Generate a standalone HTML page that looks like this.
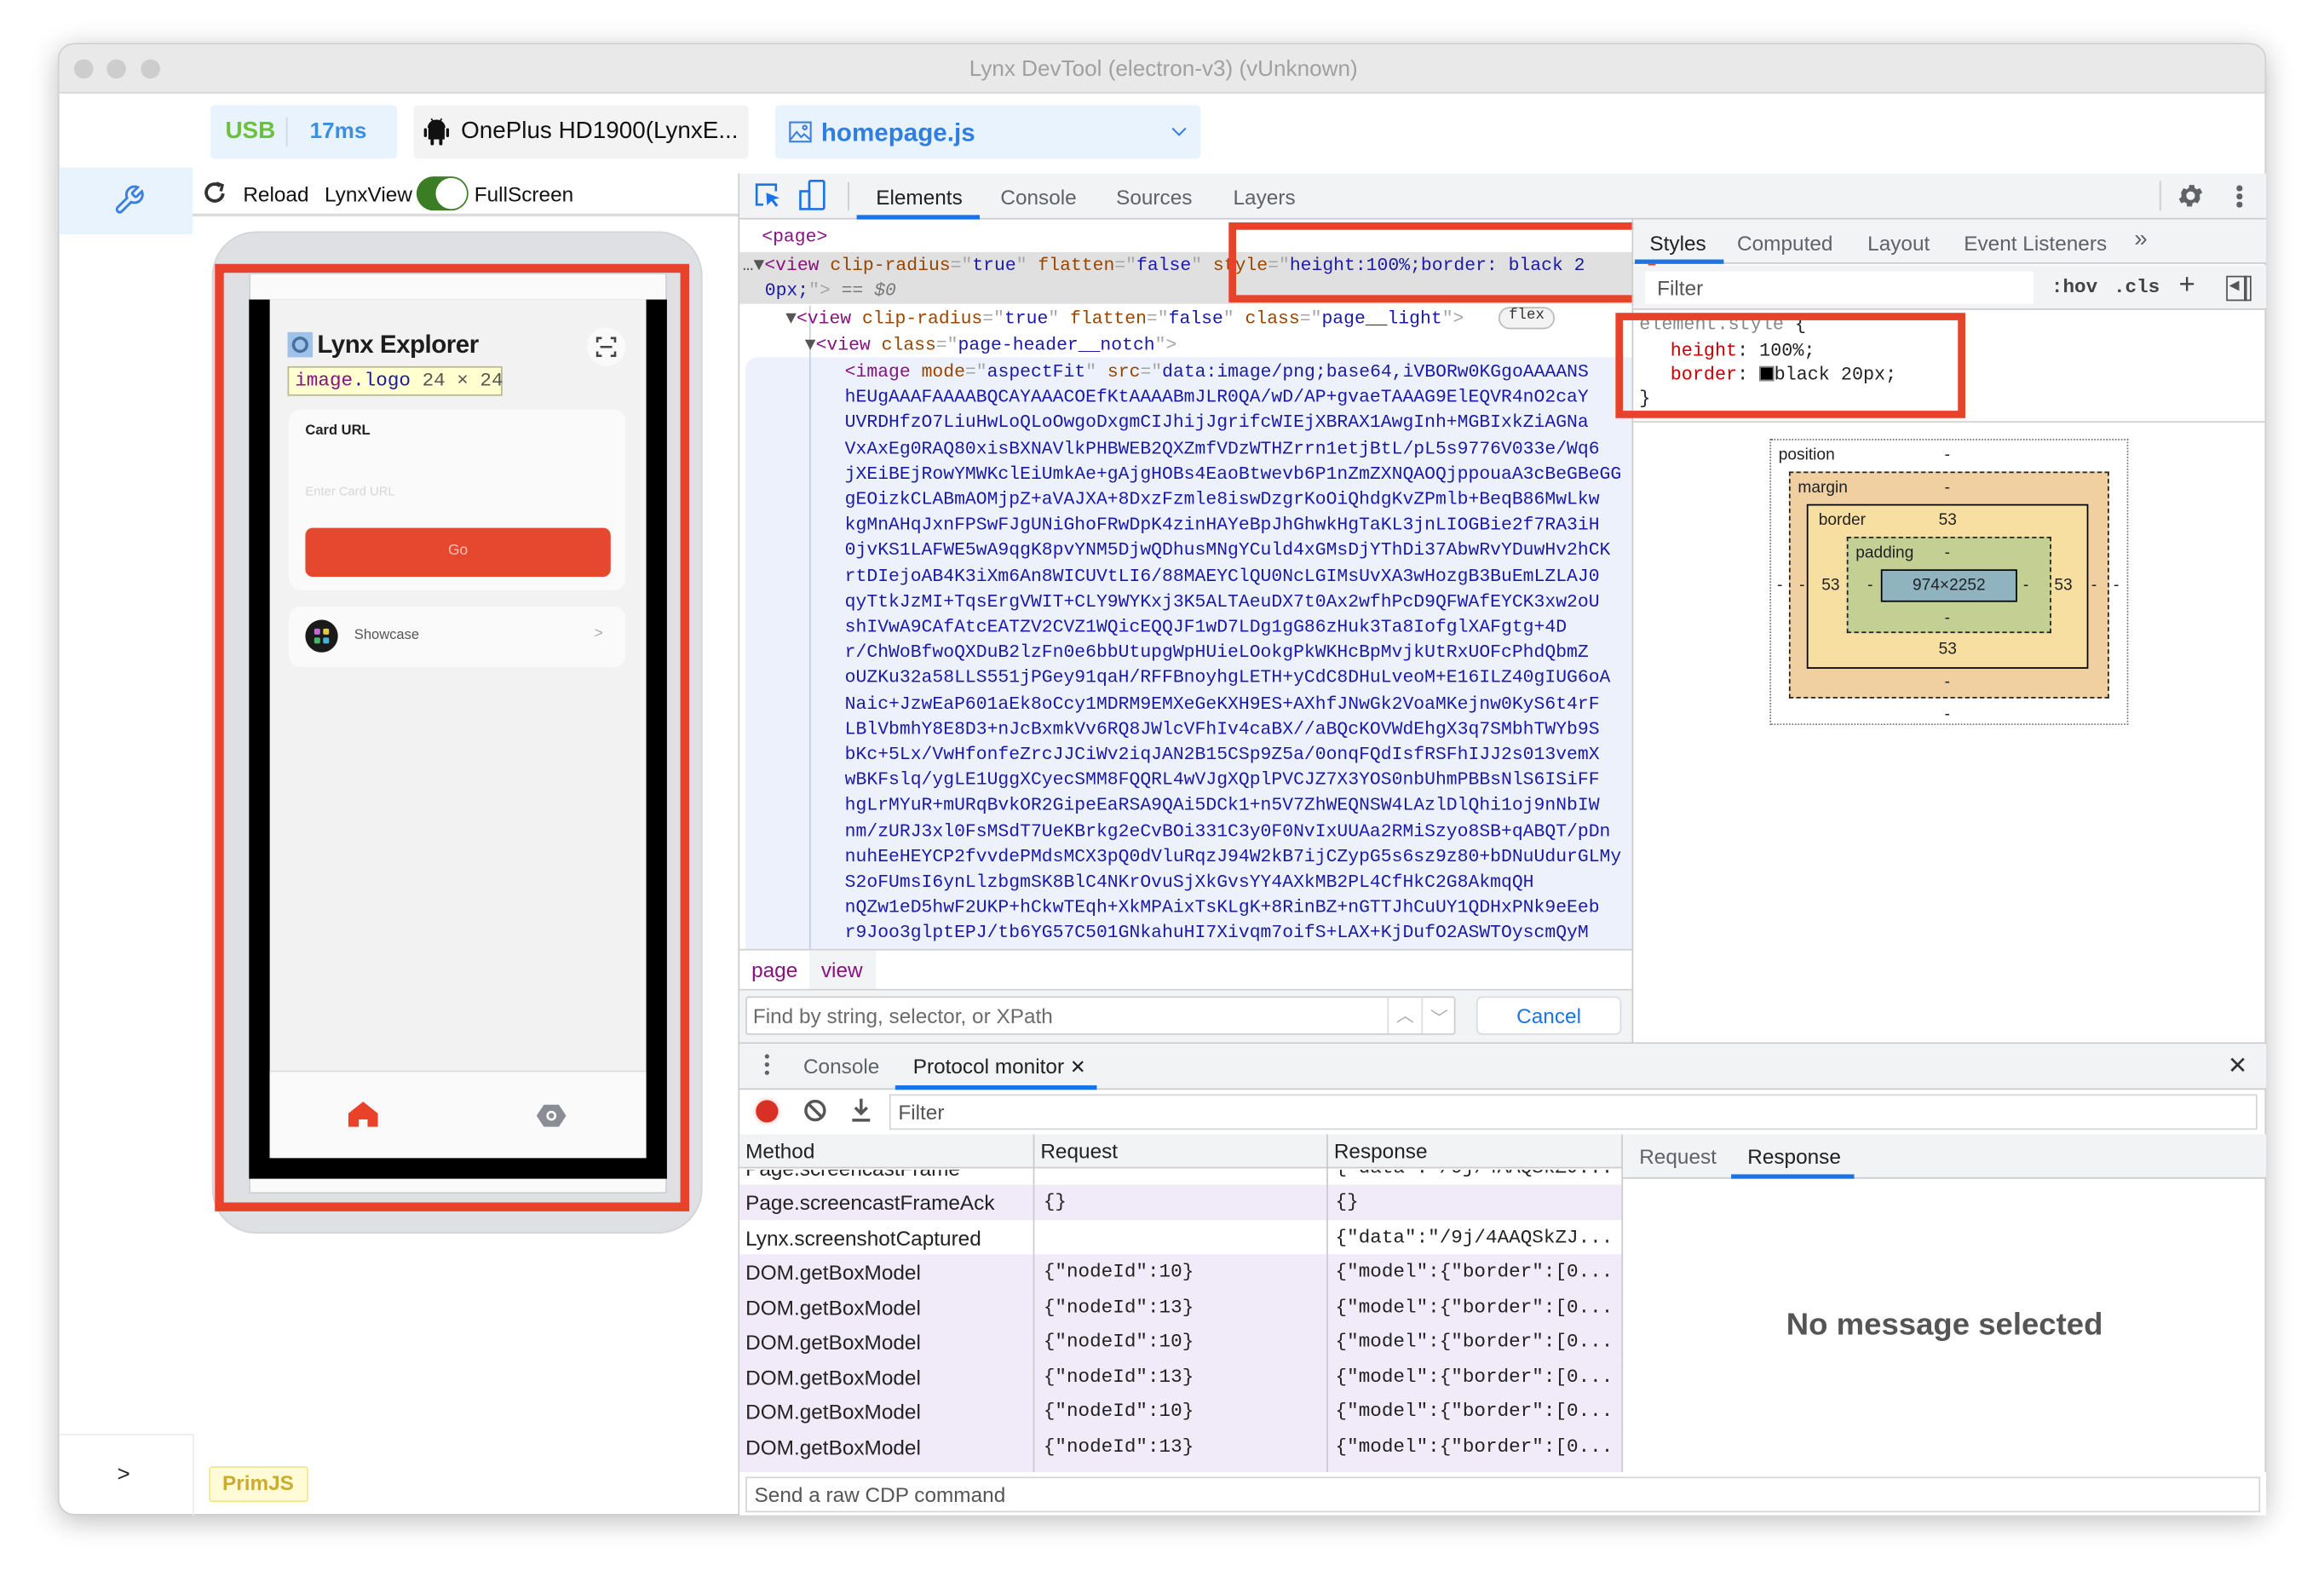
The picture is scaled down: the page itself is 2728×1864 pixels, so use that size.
<!DOCTYPE html>
<html><head><meta charset="utf-8">
<style>
*{box-sizing:border-box;margin:0;padding:0}
html,body{width:2728px;height:1864px;overflow:hidden;background:#fff;font-family:"Liberation Sans",Arial,sans-serif}
#root{position:absolute;left:0;top:0;width:1568px;height:1071px;transform:scale(1.7398,1.7404);transform-origin:0 0}
.a{position:absolute}
.t{position:absolute;white-space:nowrap}
.mono{font-family:"Liberation Mono","DejaVu Sans Mono",monospace}
.tag{color:#881280}.at{color:#994500}.av{color:#1a1aa6}.pu{color:#a5a5a5}
.code{font-size:12.3px;line-height:17.2px;color:#1a1aa6}
.row{position:absolute;left:499px;width:596px;height:23.5px;font-size:14px;color:#222}
.row span{position:absolute;top:4px;white-space:nowrap}
</style></head><body><div id="root">
<!-- window -->
<div class="a" style="left:39px;top:29px;width:1490px;height:993px;border-radius:11px;background:#fff;box-shadow:0 4px 18px rgba(0,0,0,.25);overflow:hidden;border:1px solid #cfcfcf">
 <div class="a" style="left:0;top:0;width:1490px;height:33px;background:#e9e9e9;border-bottom:1px solid #d6d6d6"></div>
 <div class="a" style="left:10px;top:10px;width:13px;height:13px;border-radius:50%;background:#cdcdcd"></div>
 <div class="a" style="left:32px;top:10px;width:13px;height:13px;border-radius:50%;background:#cdcdcd"></div>
 <div class="a" style="left:55px;top:10px;width:13px;height:13px;border-radius:50%;background:#cdcdcd"></div>
 <div class="t" style="left:0;width:1490px;text-align:center;top:8px;font-size:15px;color:#a0a0a0">Lynx DevTool (electron-v3) (vUnknown)</div>
</div>

<!-- sidebar -->
<div class="a" style="left:40px;top:113px;width:90px;height:45px;background:#e8f3fd"></div>
<svg class="a" style="left:76px;top:124px" width="22" height="22" viewBox="0 0 24 24" fill="none" stroke="#3b7fe0" stroke-width="1.8"><path d="M14.7 6.3a1 1 0 000 1.4l1.6 1.6a1 1 0 001.4 0l3.8-3.8a6 6 0 01-7.9 7.9l-6.9 6.9a2.1 2.1 0 01-3-3l6.9-6.9a6 6 0 017.9-7.9z"/></svg>
<div class="a" style="left:40px;top:967px;width:90px;height:1px;background:#ececec"></div>
<div class="a" style="left:130px;top:967px;width:1px;height:55px;background:#ececec"></div>
<div class="t" style="left:79px;top:986px;font-size:15px;color:#222">&gt;</div>
<div class="a" style="left:141px;top:989px;width:67px;height:24px;background:#fffbd6;border:1px solid #f3e68a;border-radius:2px"></div>
<div class="t" style="left:150px;top:992px;font-size:14px;font-weight:bold;color:#cdac2c">PrimJS</div>

<!-- top chips -->
<div class="a" style="left:142px;top:71px;width:126px;height:36px;background:#e8f3fd;border-radius:3px"></div>
<div class="t" style="left:152px;top:80px;font-size:16px;font-weight:bold;color:#6cc03c">USB</div>
<div class="a" style="left:193px;top:79px;width:1px;height:20px;background:#cfd8e0"></div>
<div class="t" style="left:209px;top:80px;font-size:15px;font-weight:bold;color:#3b8fe0">17ms</div>
<div class="a" style="left:279px;top:71px;width:226px;height:36px;background:#f3f3f3;border-radius:3px"></div>
<svg class="a" style="left:286px;top:79px" width="17" height="20" viewBox="0 0 17 20"><path d="M3 7h11v8H3z M2.5 7.2a6 5.5 0 0112 0z" fill="#111"/><rect x="0" y="7.5" width="2" height="6" rx="1" fill="#111"/><rect x="15" y="7.5" width="2" height="6" rx="1" fill="#111"/><rect x="4.5" y="14" width="2.2" height="5" rx="1" fill="#111"/><rect x="10.3" y="14" width="2.2" height="5" rx="1" fill="#111"/><path d="M5 1l1.5 2.5M12 1l-1.5 2.5" stroke="#111"/></svg>
<div class="t" style="left:311px;top:80px;font-size:16px;color:#111">OnePlus HD1900(LynxE...</div>
<div class="a" style="left:523px;top:71px;width:287px;height:36px;background:#e8f3fd;border-radius:3px"></div>
<svg class="a" style="left:532px;top:81px" width="16" height="16" viewBox="0 0 16 16" fill="none" stroke="#3b7fe0" stroke-width="1.2"><rect x="1" y="1.5" width="14" height="13"/><path d="M1.5 13l4-5 3 3.5 2-2 4 3.5"/><circle cx="11" cy="5" r="1.3"/></svg>
<div class="t" style="left:554px;top:80px;font-size:17px;font-weight:bold;color:#2e7fe0">homepage.js</div>
<svg class="a" style="left:790px;top:85px" width="11" height="8" viewBox="0 0 11 8" fill="none" stroke="#3b7fe0" stroke-width="1.2"><path d="M1 1.5l4.5 4.5 4.5-4.5"/></svg>

<!-- toolbar -->
<svg class="a" style="left:136px;top:121px" width="18" height="18" viewBox="0 0 18 18" fill="none" stroke="#333" stroke-width="2.2"><path d="M14.5 9.5a5.7 5.7 0 11-2-5"/><path d="M10 2.5l4 1.5-1 4" stroke-width="2"/></svg>
<div class="t" style="left:164px;top:123px;font-size:14px;color:#111">Reload</div>
<div class="t" style="left:219px;top:123px;font-size:14px;color:#111">LynxView</div>
<div class="a" style="left:281px;top:119px;width:35px;height:23px;border-radius:12px;background:#3a7d24"></div>
<div class="a" style="left:294px;top:120px;width:21px;height:21px;border-radius:50%;background:#fff"></div>
<div class="t" style="left:320px;top:123px;font-size:14px;color:#111">FullScreen</div>
<div class="a" style="left:130px;top:144px;width:368px;height:2px;background:#dcdcdc"></div>

<!-- phone -->
<div class="a" style="left:143px;top:156px;width:331px;height:676px;background:#dfe0e4;border-radius:30px;border:1px solid #d3d4d8"></div>
<div class="a" style="left:145px;top:178px;width:320px;height:639px;border:6px solid #e8432a;background:#dfe0e4"></div>
<div class="a" style="left:168px;top:184px;width:282px;height:621px;background:#fafafa;border:1px solid #cfcfd2"></div>
<div class="a" style="left:168px;top:202px;width:282px;height:593px;background:#000"></div>
<div class="a" style="left:182px;top:202px;width:254px;height:579px;background:#f2f2f2"></div>
<div class="a" style="left:182px;top:722px;width:254px;height:59px;background:#fafafa;border-top:1px solid #ddd"></div>
<svg class="a" style="left:235px;top:743px" width="20" height="17" viewBox="0 0 20 17"><path d="M10 0L0 8v9h7v-5h6v5h7V8z" fill="#e8432a"/><rect x="8.5" y="12" width="3" height="5" fill="#fff"/></svg>
<svg class="a" style="left:362px;top:745px" width="20" height="15" viewBox="0 0 20 15"><path d="M5 0h10l5 7.5-5 7.5H5L0 7.5z" fill="#8a8d94"/><circle cx="10" cy="7.5" r="2.6" fill="none" stroke="#fff" stroke-width="1.5"/></svg>
<div class="a" style="left:194px;top:224px;width:17px;height:17px;background:#9ec2ea"></div>
<div class="a" style="left:197px;top:227px;width:11px;height:11px;border-radius:50%;border:2px solid #47709c"></div>
<div class="t" style="left:214px;top:223px;font-size:17px;color:#1d1d1d;font-weight:bold;letter-spacing:-0.3px">Lynx Explorer</div>
<div class="a" style="left:396px;top:221px;width:26px;height:26px;border-radius:50%;background:#fafafa"></div>
<svg class="a" style="left:402px;top:227px" width="14" height="14" viewBox="0 0 14 14" fill="none" stroke="#444" stroke-width="1.5"><path d="M1 4V1h3M10 1h3v3M13 10v3h-3M4 13H1v-3M3 7h8"/></svg>
<div class="a" style="left:194px;top:247px;width:145px;height:20px;background:#ffffd0;border:1px solid #b8b890"></div>
<div class="t mono" style="left:199px;top:249px;font-size:13px"><span style="color:#881280">image</span><span style="color:#1a1aa6">.logo</span> <span style="color:#555">24 × 24</span></div>
<div class="a" style="left:195px;top:276px;width:227px;height:122px;background:#fafafa;border-radius:8px"></div>
<div class="t" style="left:206px;top:285px;font-size:9.5px;font-weight:bold;color:#222">Card URL</div>
<div class="t" style="left:206px;top:326px;font-size:8.5px;color:#d6d6d6">Enter Card URL</div>
<div class="a" style="left:206px;top:356px;width:206px;height:33px;background:#e5482f;border-radius:5px"></div>
<div class="t" style="left:206px;top:366px;width:206px;text-align:center;font-size:10px;color:#f7c0b4">Go</div>
<div class="a" style="left:195px;top:409px;width:227px;height:41px;background:#fafafa;border-radius:8px"></div>
<div class="a" style="left:206px;top:418px;width:22px;height:22px;border-radius:50%;background:#1a1a1a"></div>
<div class="a" style="left:212px;top:424px;width:4px;height:4px;background:#c36ad9;border-radius:1px"></div>
<div class="a" style="left:218px;top:424px;width:4px;height:4px;background:#e3c93b;border-radius:1px"></div>
<div class="a" style="left:212px;top:430px;width:4px;height:4px;background:#46b86b;border-radius:1px"></div>
<div class="a" style="left:218px;top:430px;width:4px;height:4px;background:#4bb1d9;border-radius:1px"></div>
<div class="t" style="left:239px;top:423px;font-size:9.5px;color:#555">Showcase</div>
<div class="t" style="left:401px;top:422px;font-size:10px;color:#aaa">&gt;</div>

<!-- devtools -->
<div class="a" style="left:498px;top:117px;width:1px;height:905px;background:#cbcbcb"></div>
<div class="a" style="left:499px;top:117px;width:1030px;height:31px;background:#f1f3f4;border-bottom:1px solid #cbcdd1"></div>
<svg class="a" style="left:509px;top:123px" width="18" height="19" viewBox="0 0 18 19" fill="none" stroke="#1a73e8" stroke-width="1.5"><path d="M6 15H1.5V1.5h13V6"/><path d="M8 7l9 3.5-4 1 3 4-1.5 1-3-4-3 3z" fill="#1a73e8" stroke="none"/></svg>
<svg class="a" style="left:539px;top:121px" width="18" height="21" viewBox="0 0 18 21" fill="none" stroke="#1a73e8" stroke-width="1.5"><rect x="7" y="1" width="10" height="19" rx="1"/><rect x="1" y="8" width="6" height="12"/></svg>
<div class="a" style="left:572px;top:123px;width:1px;height:19px;background:#ccc"></div>
<div class="t" style="left:591px;top:125px;font-size:14px;color:#202124">Elements</div>
<div class="a" style="left:578px;top:145px;width:83px;height:3px;background:#1a73e8"></div>
<div class="t" style="left:675px;top:125px;font-size:14px;color:#5f6368">Console</div>
<div class="t" style="left:753px;top:125px;font-size:14px;color:#5f6368">Sources</div>
<div class="t" style="left:832px;top:125px;font-size:14px;color:#5f6368">Layers</div>
<div class="a" style="left:1457px;top:122px;width:1px;height:20px;background:#ccc"></div>
<svg class="a" style="left:1468px;top:122px" width="20" height="20" viewBox="0 0 24 24"><path fill="#5f6368" d="M19.4 13a7.5 7.5 0 000-2l2.1-1.6-2-3.5-2.5 1a7 7 0 00-1.7-1l-.4-2.6h-4l-.4 2.6a7 7 0 00-1.7 1l-2.5-1-2 3.5L4.6 11a7.5 7.5 0 000 2l-2.1 1.6 2 3.5 2.5-1a7 7 0 001.7 1l.4 2.6h4l.4-2.6a7 7 0 001.7-1l2.5 1 2-3.5zM12 15.5a3.5 3.5 0 110-7 3.5 3.5 0 010 7z"/></svg>
<div class="a" style="left:1509px;top:125px;width:3.5px;height:3.5px;border-radius:50%;background:#5f6368;box-shadow:0 5.5px 0 #5f6368,0 11px 0 #5f6368"></div>

<!-- elements tree -->
<div class="a" style="left:499px;top:170px;width:602px;height:35px;background:#e0e0e0"></div>
<div class="a" style="left:503px;top:241px;width:598px;height:399px;background:#ecf1fb;border-radius:8px 0 0 0"></div>
<div class="a" style="left:546px;top:206px;width:1px;height:434px;background:#c3cfe8"></div>
<div class="t mono code" style="left:514px;top:152px"><span class="tag">&lt;page&gt;</span></div>
<div class="t mono code" style="left:501px;top:171px"><span style="color:#555">…▼</span><span class="tag">&lt;view</span> <span class="at">clip-radius</span><span class="pu">="</span><span class="av">true</span><span class="pu">"</span> <span class="at">flatten</span><span class="pu">="</span><span class="av">false</span><span class="pu">"</span> <span class="at">style</span><span class="pu">="</span><span class="av">height:100%;border: black 2</span></div>
<div class="t mono code" style="left:516px;top:188px"><span class="av">0px;</span><span class="pu">"&gt;</span> <span style="color:#777">== </span><i style="color:#777">$0</i></div>
<div class="t mono code" style="left:530px;top:207px"><span style="color:#555">▼</span><span class="tag">&lt;view</span> <span class="at">clip-radius</span><span class="pu">="</span><span class="av">true</span><span class="pu">"</span> <span class="at">flatten</span><span class="pu">="</span><span class="av">false</span><span class="pu">"</span> <span class="at">class</span><span class="pu">="</span><span class="av">page__light</span><span class="pu">"&gt;</span></div>
<div class="a" style="left:1011px;top:207px;width:38px;height:15px;border:1px solid #bbb;border-radius:8px;background:#f3f3f3"></div>
<div class="t mono" style="left:1018px;top:208px;font-size:10px;color:#333">flex</div>
<div class="t mono code" style="left:543px;top:225px"><span style="color:#555">▼</span><span class="tag">&lt;view</span> <span class="at">class</span><span class="pu">="</span><span class="av">page-header__notch</span><span class="pu">"&gt;</span></div>
<div class="a mono code" style="left:570px;top:243px;width:528px;height:397px;overflow:hidden;white-space:pre"><span class="tag">&lt;image</span> <span class="at">mode</span><span class="pu">="</span>aspectFit<span class="pu">"</span> <span class="at">src</span><span class="pu">="</span>data:image/png;base64,iVBORw0KGgoAAAANS
hEUgAAAFAAAABQCAYAAACOEfKtAAAABmJLR0QA/wD/AP+gvaeTAAAG9ElEQVR4nO2caY
UVRDHfzO7LiuHwLoQLoOwgoDxgmCIJhijJgrifcWIEjXBRAX1AwgInh+MGBIxkZiAGNa
VxAxEg0RAQ80xisBXNAVlkPHBWEB2QXZmfVDzWTHZrrn1etjBtL/pL5s9776V033e/Wq6
jXEiBEjRowYMWKclEiUmkAe+gAjgHOBs4EaoBtwevb6P1nZmZXNQAOQjppouaA3cBeGBeGG
gEOizkCLABmAOMjpZ+aVAJXA+8DxzFzmle8iswDzgrKoOiQhdgKvZPmlb+BeqB86MwLkw
kgMnAHqJxnFPSwFJgUNiGhoFRwDpK4zinHAYeBpJhGhwkHgTaKL3jnLIOGBie2f7RA3iH
0jvKS1LAFWE5wA9qgK8pvYNM5DjwQDhusMNgYCuld4xGMsDjYThDi37AbwRvYDuwHv2hCK
rtDIejoAB4K3iXm6An8WICUVtLI6/88MAEYClQU0NcLGIMsUvXA3wHozgB3BuEmLZLAJ0
qyTtkJzMI+TqsErgVWIT+CLY9WYKxj3K5ALTAeuDX7t0Ax2wfhPcD9QFWAfEYCK3xw2oU
shIVwA9CAfAtcEATZV2CVZ1WQicEQQJF1wD7LDg1gG86zHuk3Ta8IofglXAFgtg+4D
r/ChWoBfwoQXDuB2lzFn0e6bbUtupgWpHUieLOokgPkWKHcBpMvjkUtRxUOFcPhdQbmZ
oUZKu32a58LLS551jPGey91qaH/RFFBnoyhgLETH+yCdC8DHuLveoM+E16ILZ40gIUG6oA
Naic+JzwEaP601aEk8oCcy1MDRM9EMXeGeKXH9ES+AXhfJNwGk2VoaMKejnw0KyS6t4rF
LBlVbmhY8E8D3+nJcBxmkVv6RQ8JWlcVFhIv4caBX//aBQcKOVWdEhgX3q7SMbhTWYb9S
bKc+5Lx/VwHfonfeZrcJJCiWv2iqJAN2B15CSp9Z5a/0onqFQdIsfRSFhIJJ2s013vemX
wBKFslq/ygLE1UggXCyecSMM8FQQRL4wVJgXQplPVCJZ7X3YOS0nbUhmPBBsNlS6ISiFF
hgLrMYuR+mURqBvkOR2GipeEaRSA9QAi5DCk1+n5V7ZhWEQNSW4LAzlDlQhi1oj9nNbIW
nm/zURJ3xl0FsMSdT7UeKBrkg2eCvBOi331C3y0F0NvIxUUAa2RMiSzyo8SB+qABQT/pDn
nuhEeHEYCP2fvvdePMdsMCX3pQ0dVluRqzJ94W2kB7ijCZypG5s6sz9z80+bDNuUdurGLMy
S2oFUmsI6ynLlzbgmSK8BlC4NKrOvuSjXkGvsYY4AXkMB2PL4CfHkC2G8AkmqQH
nQZw1eD5hwF2UKP+hCkwTEqh+XkMPAixTsKLgK+8RinBZ+nGTTJhCuUY1QDHxPNk9eEeb
r9Joo3glptEPJ/tb6YG57C501GNkahuHI7Xivqm7oifS+LAX+KjDufO2ASWTOyscmQyM</div>
<div class="a" style="left:829px;top:150px;width:288px;height:54px;border:5px solid #e8432a"></div>

<!-- breadcrumb / search -->
<div class="a" style="left:499px;top:640px;width:602px;height:1px;background:#d0d0d0"></div>
<div class="t" style="left:507px;top:646px;font-size:14px;color:#881280">page</div>
<div class="a" style="left:546px;top:641px;width:45px;height:26px;background:#f1f3f4"></div>
<div class="t" style="left:554px;top:646px;font-size:14px;color:#881280">view</div>
<div class="a" style="left:499px;top:667px;width:602px;height:1px;background:#d0d0d0"></div>
<div class="a" style="left:499px;top:668px;width:602px;height:35px;background:#f1f3f4"></div>
<div class="a" style="left:503px;top:672px;width:479px;height:26px;background:#fff;border:1px solid #cfcfcf;border-radius:2px"></div>
<div class="t" style="left:508px;top:677px;font-size:14px;color:#6b6b6b">Find by string, selector, or XPath</div>
<div class="a" style="left:936px;top:673px;width:1px;height:24px;background:#ddd"></div>
<div class="a" style="left:959px;top:673px;width:1px;height:24px;background:#ddd"></div>
<div class="t" style="left:942px;top:676px;font-size:12px;color:#aaa">︿</div>
<div class="t" style="left:965px;top:678px;font-size:12px;color:#aaa">﹀</div>
<div class="a" style="left:996px;top:672px;width:98px;height:26px;background:#fff;border:1px solid #dadce0;border-radius:4px"></div>
<div class="t" style="left:996px;top:677px;width:98px;text-align:center;font-size:14px;color:#1a73e8">Cancel</div>

<!-- styles sidebar -->
<div class="a" style="left:1101px;top:148px;width:1px;height:555px;background:#cbcbcb"></div>
<div class="a" style="left:1102px;top:148px;width:427px;height:30px;background:#f1f3f4;border-bottom:1px solid #cbcdd1"></div>
<div class="t" style="left:1113px;top:156px;font-size:14px;color:#202124">Styles</div>
<div class="a" style="left:1103px;top:175px;width:60px;height:3px;background:#1a73e8"></div>
<div class="t" style="left:1172px;top:156px;font-size:14px;color:#5f6368">Computed</div>
<div class="t" style="left:1260px;top:156px;font-size:14px;color:#5f6368">Layout</div>
<div class="t" style="left:1325px;top:156px;font-size:14px;color:#5f6368">Event Listeners</div>
<div class="t" style="left:1440px;top:153px;font-size:16px;color:#5f6368">»</div>
<div class="a" style="left:1102px;top:179px;width:427px;height:30px;background:#f1f3f4;border-bottom:1px solid #cbcdd1"></div>
<div class="a" style="left:1110px;top:183px;width:262px;height:22px;background:#fff"></div>
<div class="t" style="left:1118px;top:186px;font-size:14px;color:#555">Filter</div>
<div class="t mono" style="left:1384px;top:186px;font-size:13px;font-weight:bold;color:#444">:hov</div>
<div class="t mono" style="left:1426px;top:186px;font-size:13px;font-weight:bold;color:#444">.cls</div>
<div class="t" style="left:1470px;top:182px;font-size:19px;color:#444">+</div>
<div class="a" style="left:1502px;top:186px;width:17px;height:17px;border:1.5px solid #555"></div>
<div class="a" style="left:1514px;top:186px;width:1.5px;height:17px;background:#555"></div>
<div class="t" style="left:1504px;top:187px;font-size:9px;color:#555">◀</div>
<div class="t mono" style="left:1106px;top:212px;font-size:12.5px;color:#888">element.style <span style="color:#222">{</span></div>
<div class="t mono" style="left:1127px;top:230px;font-size:12.5px;color:#c80000">height<span style="color:#222">: 100%;</span></div>
<div class="t mono" style="left:1127px;top:246px;font-size:12.5px;color:#c80000">border<span style="color:#222">: <span style="display:inline-block;width:10px;height:10px;background:#000;vertical-align:-1px;border:1px solid #888"></span>black 20px;</span></div>
<div class="t mono" style="left:1106px;top:262px;font-size:12.5px;color:#222">}</div>
<div class="a" style="left:1090px;top:211px;width:236px;height:71px;border:5px solid #e8432a"></div>
<div class="a" style="left:1102px;top:284px;width:427px;height:1px;background:#d0d0d0"></div>
<!-- box model -->
<div class="a" style="left:1194px;top:296px;width:242px;height:193px;border:1px dotted #777"></div>
<div class="t" style="left:1200px;top:301px;font-size:11px;color:#222">position</div>
<div class="t" style="left:1312px;top:301px;font-size:11px;color:#222">-</div>
<div class="a" style="left:1207px;top:318px;width:216px;height:153px;border:1px dashed #222;background:#f0cfa0"></div>
<div class="t" style="left:1213px;top:323px;font-size:11px;color:#222">margin</div>
<div class="t" style="left:1312px;top:323px;font-size:11px;color:#222">-</div>
<div class="a" style="left:1219px;top:340px;width:190px;height:111px;border:1px solid #000;background:#f7dfa1"></div>
<div class="t" style="left:1227px;top:345px;font-size:11px;color:#222">border</div>
<div class="t" style="left:1308px;top:345px;font-size:11px;color:#222">53</div>
<div class="a" style="left:1246px;top:362px;width:138px;height:65px;border:1px dashed #222;background:#c4cf93"></div>
<div class="t" style="left:1252px;top:367px;font-size:11px;color:#222">padding</div>
<div class="t" style="left:1312px;top:367px;font-size:11px;color:#222">-</div>
<div class="a" style="left:1269px;top:384px;width:92px;height:22px;border:1px solid #000;background:#8fb4c0"></div>
<div class="t" style="left:1269px;top:389px;width:92px;text-align:center;font-size:11px;color:#222">974×2252</div>
<div class="t" style="left:1199px;top:389px;font-size:11px;color:#222">-</div>
<div class="t" style="left:1214px;top:389px;font-size:11px;color:#222">-</div>
<div class="t" style="left:1229px;top:389px;font-size:11px;color:#222">53</div>
<div class="t" style="left:1260px;top:389px;font-size:11px;color:#222">-</div>
<div class="t" style="left:1365px;top:389px;font-size:11px;color:#222">-</div>
<div class="t" style="left:1386px;top:389px;font-size:11px;color:#222">53</div>
<div class="t" style="left:1411px;top:389px;font-size:11px;color:#222">-</div>
<div class="t" style="left:1426px;top:389px;font-size:11px;color:#222">-</div>
<div class="t" style="left:1312px;top:411px;font-size:11px;color:#222">-</div>
<div class="t" style="left:1308px;top:432px;font-size:11px;color:#222">53</div>
<div class="t" style="left:1312px;top:454px;font-size:11px;color:#222">-</div>
<div class="t" style="left:1312px;top:476px;font-size:11px;color:#222">-</div>

<!-- drawer -->
<div class="a" style="left:499px;top:703px;width:1030px;height:1px;background:#cbcbcb"></div>
<div class="a" style="left:499px;top:704px;width:1030px;height:31px;background:#f1f3f4;border-bottom:1px solid #cbcdd1"></div>
<div class="a" style="left:516px;top:711px;width:3px;height:3px;border-radius:50%;background:#5f6368;box-shadow:0 5.5px 0 #5f6368,0 11px 0 #5f6368"></div>
<div class="t" style="left:542px;top:711px;font-size:14px;color:#5f6368">Console</div>
<div class="t" style="left:616px;top:711px;font-size:14px;color:#202124">Protocol monitor <span style="font-size:13px">✕</span></div>
<div class="a" style="left:604px;top:732px;width:136px;height:3px;background:#1a73e8"></div>
<div class="t" style="left:1503px;top:709px;font-size:16px;color:#333">✕</div>
<div class="a" style="left:510px;top:742px;width:15px;height:15px;border-radius:50%;background:#d93025;box-shadow:0 0 3px #f3a29b"></div>
<svg class="a" style="left:542px;top:741px" width="16" height="16" viewBox="0 0 16 16" fill="none" stroke="#555" stroke-width="2"><circle cx="8" cy="8" r="6.3"/><path d="M3.5 3.5l9 9"/></svg>
<svg class="a" style="left:574px;top:741px" width="14" height="16" viewBox="0 0 14 16"><path d="M7 0v9M3 6l4 4 4-4" stroke="#555" stroke-width="2" fill="none"/><rect x="1" y="13.5" width="12" height="2" fill="#555"/></svg>
<div class="a" style="left:600px;top:738px;width:923px;height:24px;background:#fff;border:1px solid #d5d5d5"></div>
<div class="t" style="left:606px;top:742px;font-size:14px;color:#555">Filter</div>

<!-- table -->
<div class="a" style="left:499px;top:765px;width:596px;height:23px;background:#f1f3f4;border-bottom:1px solid #cbcdd1"></div>
<div class="t" style="left:503px;top:768px;font-size:14px;color:#222">Method</div>
<div class="t" style="left:702px;top:768px;font-size:14px;color:#222">Request</div>
<div class="t" style="left:900px;top:768px;font-size:14px;color:#222">Response</div>
<div class="a" style="left:499px;top:789px;width:596px;height:10px;overflow:hidden;background:#fff"><div class="t" style="left:4px;top:-9px;font-size:14px;color:#222">Page.screencastFrame</div><div class="t mono" style="left:402px;top:-9px;font-size:13px;color:#222">{"data":"/9j/4AAQSkZJ...</div></div>
<div class="row" style="top:799px;background:#f1eaf8"><span style="left:4px">Page.screencastFrameAck</span><span class="mono" style="left:205px;font-size:13px">{}</span><span class="mono" style="left:402px;font-size:13px">{}</span></div>
<div class="row" style="top:822.5px;background:#fff"><span style="left:4px">Lynx.screenshotCaptured</span><span class="mono" style="left:402px;font-size:13px">{"data":"/9j/4AAQSkZJ...</span></div>
<div class="row" style="top:846px;background:#f1eaf8"><span style="left:4px">DOM.getBoxModel</span><span class="mono" style="left:205px;font-size:13px">{"nodeId":10}</span><span class="mono" style="left:402px;font-size:13px">{"model":{"border":[0...</span></div>
<div class="row" style="top:869.5px;background:#f1eaf8"><span style="left:4px">DOM.getBoxModel</span><span class="mono" style="left:205px;font-size:13px">{"nodeId":13}</span><span class="mono" style="left:402px;font-size:13px">{"model":{"border":[0...</span></div>
<div class="row" style="top:893px;background:#f1eaf8"><span style="left:4px">DOM.getBoxModel</span><span class="mono" style="left:205px;font-size:13px">{"nodeId":10}</span><span class="mono" style="left:402px;font-size:13px">{"model":{"border":[0...</span></div>
<div class="row" style="top:916.5px;background:#f1eaf8"><span style="left:4px">DOM.getBoxModel</span><span class="mono" style="left:205px;font-size:13px">{"nodeId":13}</span><span class="mono" style="left:402px;font-size:13px">{"model":{"border":[0...</span></div>
<div class="row" style="top:940px;background:#f1eaf8"><span style="left:4px">DOM.getBoxModel</span><span class="mono" style="left:205px;font-size:13px">{"nodeId":10}</span><span class="mono" style="left:402px;font-size:13px">{"model":{"border":[0...</span></div>
<div class="row" style="top:963.5px;background:#f1eaf8;height:29px"><span style="left:4px">DOM.getBoxModel</span><span class="mono" style="left:205px;font-size:13px">{"nodeId":13}</span><span class="mono" style="left:402px;font-size:13px">{"model":{"border":[0...</span></div>
<div class="a" style="left:697px;top:765px;width:1px;height:228px;background:#cbcbcb"></div>
<div class="a" style="left:895px;top:765px;width:1px;height:228px;background:#cbcbcb"></div>
<div class="a" style="left:1094px;top:765px;width:1px;height:228px;background:#cbcbcb"></div>
<div class="a" style="left:1095px;top:765px;width:434px;height:30px;background:#f1f3f4;border-bottom:1px solid #cbcdd1"></div>
<div class="t" style="left:1106px;top:772px;font-size:14px;color:#5f6368">Request</div>
<div class="t" style="left:1179px;top:772px;font-size:14px;color:#202124">Response</div>
<div class="a" style="left:1168px;top:792px;width:83px;height:3px;background:#1a73e8"></div>
<div class="t" style="left:1095px;top:882px;width:434px;text-align:center;font-size:21px;font-weight:bold;color:#555">No message selected</div>
<div class="a" style="left:499px;top:993px;width:1030px;height:29px;background:#fff"></div>
<div class="a" style="left:503px;top:996px;width:1022px;height:24px;border:1px solid #d5d5d5;background:#fff"></div>
<div class="t" style="left:509px;top:1000px;font-size:14px;color:#555">Send a raw CDP command</div>
</div></body></html>
